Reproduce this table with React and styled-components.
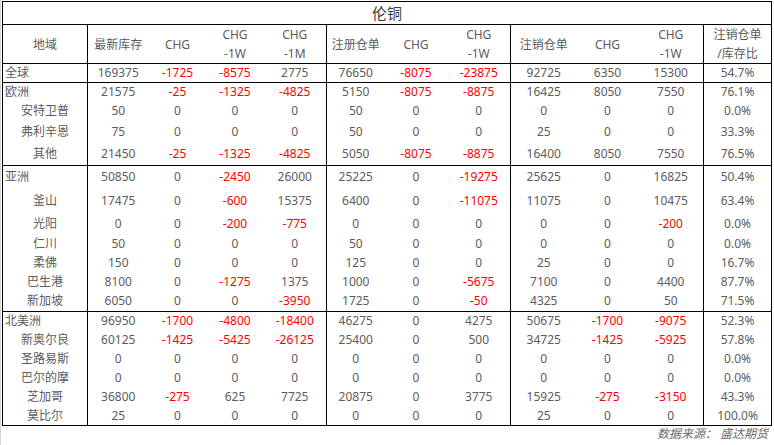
import styled, { createGlobalStyle } from "styled-components";

const GlobalStyle = createGlobalStyle`
  html, body {
    margin: 0;
    padding: 0;
    background: #ffffff;
  }
  body {
    font-family: "Noto Sans", "Noto Sans CJK SC", sans-serif;
  }
`;

const widths = [85, 61, 58, 57, 63, 58, 63, 63, 66, 62, 65, 68];
const dividers = [0, 4, 7, 10];

const sections = [
  {
    name: "全球",
    height: 19,
    values: ["169375", "-1725", "-8575", "2775", "76650", "-8075", "-23875", "92725", "6350", "15300", "54.7%"],
    items: [],
  },
  {
    name: "欧洲",
    height: 19,
    values: ["21575", "-25", "-1325", "-4825", "5150", "-8075", "-8875", "16425", "8050", "7550", "76.1%"],
    items: [
      { name: "安特卫普", height: 19, values: ["50", "0", "0", "0", "50", "0", "0", "0", "0", "0", "0.0%"] },
      { name: "弗利辛恩", height: 23, values: ["75", "0", "0", "0", "50", "0", "0", "25", "0", "0", "33.3%"] },
      { name: "其他", height: 22, values: ["21450", "-25", "-1325", "-4825", "5050", "-8075", "-8875", "16400", "8050", "7550", "76.5%"] },
    ],
  },
  {
    name: "亚洲",
    height: 23,
    values: ["50850", "0", "-2450", "26000", "25225", "0", "-19275", "25625", "0", "16825", "50.4%"],
    items: [
      { name: "釜山", height: 24, values: ["17475", "0", "-600", "15375", "6400", "0", "-11075", "11075", "0", "10475", "63.4%"] },
      { name: "光阳", height: 22, values: ["0", "0", "-200", "-775", "0", "0", "0", "0", "0", "-200", "0.0%"] },
      { name: "仁川", height: 19, values: ["50", "0", "0", "0", "50", "0", "0", "0", "0", "0", "0.0%"] },
      { name: "柔佛", height: 19, values: ["150", "0", "0", "0", "125", "0", "0", "25", "0", "0", "16.7%"] },
      { name: "巴生港", height: 19, values: ["8100", "0", "-1275", "1375", "1000", "0", "-5675", "7100", "0", "4400", "87.7%"] },
      { name: "新加坡", height: 20, values: ["6050", "0", "0", "-3950", "1725", "0", "-50", "4325", "0", "50", "71.5%"] },
    ],
  },
  {
    name: "北美洲",
    height: 19,
    values: ["96950", "-1700", "-4800", "-18400", "46275", "0", "4275", "50675", "-1700", "-9075", "52.3%"],
    items: [
      { name: "新奥尔良", height: 19, values: ["60125", "-1425", "-5425", "-26125", "25400", "0", "500", "34725", "-1425", "-5925", "57.8%"] },
      { name: "圣路易斯", height: 19, values: ["0", "0", "0", "0", "0", "0", "0", "0", "0", "0", "0.0%"] },
      { name: "巴尔的摩", height: 19, values: ["0", "0", "0", "0", "0", "0", "0", "0", "0", "0", "0.0%"] },
      { name: "芝加哥", height: 19, values: ["36800", "-275", "625", "7725", "20875", "0", "3775", "15925", "-275", "-3150", "43.3%"] },
      { name: "莫比尔", height: 19, values: ["25", "0", "0", "0", "0", "0", "0", "25", "0", "0", "100.0%"] },
    ],
  },
];

const headers = [
  ["地域"],
  ["最新库存"],
  ["CHG"],
  ["CHG", "-1W"],
  ["CHG", "-1M"],
  ["注册仓单"],
  ["CHG"],
  ["CHG", "-1W"],
  ["注销仓单"],
  ["CHG"],
  ["CHG", "-1W"],
  ["注销仓单", "/库存比"],
];

const Row = ({ name, values, height, region, last }) => (
  <BodyRow $h={height} $last={last}>
    <NameCell $region={region}>{name}</NameCell>
    {values.map((v, i) => (
      <Cell key={i} $divider={dividers.includes(i + 1)} $neg={v.startsWith("-")}>
        {v}
      </Cell>
    ))}
  </BodyRow>
);

export default function App() {
  return (
    <>
      <GlobalStyle />
      <Page>
        <Table>
          <colgroup>
            {widths.map((w, i) => (
              <col key={i} style={{ width: w }} />
            ))}
          </colgroup>
          <thead>
            <tr>
              <Title colSpan={12}>伦铜</Title>
            </tr>
            <HeadRow>
              {headers.map((lines, i) => (
                <HeadCell key={i} $divider={dividers.includes(i)}>
                  {lines.map((l) => (
                    <div key={l}>{l}</div>
                  ))}
                </HeadCell>
              ))}
            </HeadRow>
          </thead>
          {sections.map((s) => (
            <Section key={s.name}>
              <Row name={s.name} values={s.values} height={s.height} region last={s.items.length === 0} />
              {s.items.map((it, j) => (
                <Row key={it.name} {...it} last={j === s.items.length - 1} />
              ))}
            </Section>
          ))}
        </Table>
        <Source>数据来源： 盛达期货</Source>
      </Page>
    </>
  );
}

const Page = styled.div`
  width: 773px;
  height: 445px;
  border-left: 1px solid #d6d6d6;
  padding: 1px 0 0 1px;
  box-sizing: border-box;
  display: flex;
  flex-direction: column;
`;

const Table = styled.table`
  width: 770px;
  table-layout: fixed;
  border-collapse: collapse;
  border: 1px solid #000;
  color: #5c5c5c;
  font-size: 12px;
`;

const Title = styled.th`
  height: 22px;
  padding: 0;
  font-size: 15px;
  font-weight: normal;
  color: #3c3c3c;
  text-align: center;
  line-height: 20px;
  border-bottom: 1px solid #000;
`;

const HeadRow = styled.tr`
  height: 38px;
  border-bottom: 1px solid #000;
`;

const HeadCell = styled.th`
  padding: 0;
  font-weight: normal;
  text-align: center;
  line-height: 19px;
  border-right: ${({ $divider }) => ($divider ? "1px solid #000" : "none")};
  white-space: nowrap;
`;

const Section = styled.tbody`
  border-bottom: 1px solid #000;
`;

const BodyRow = styled.tr`
  height: ${({ $h }) => $h}px;
  border-bottom: ${({ $last }) => ($last ? "1px solid #000" : "none")};
`;

const NameCell = styled.td`
  padding: 0 0 0 ${({ $region }) => ($region ? "2px" : "0")};
  text-align: ${({ $region }) => ($region ? "left" : "center")};
  line-height: 16px;
  border-right: 1px solid #000;
  white-space: nowrap;
`;

const Cell = styled.td`
  padding: 0;
  text-align: center;
  line-height: 16px;
  color: ${({ $neg }) => ($neg ? "#ff0000" : "#5c5c5c")};
  border-right: ${({ $divider }) => ($divider ? "1px solid #000" : "none")};
  white-space: nowrap;
`;

const Source = styled.div`
  width: 770px;
  padding: 0 4px 0 0;
  box-sizing: border-box;
  text-align: right;
  font-size: 12px;
  font-style: italic;
  color: #6a6a6a;
  line-height: 16px;
`;
